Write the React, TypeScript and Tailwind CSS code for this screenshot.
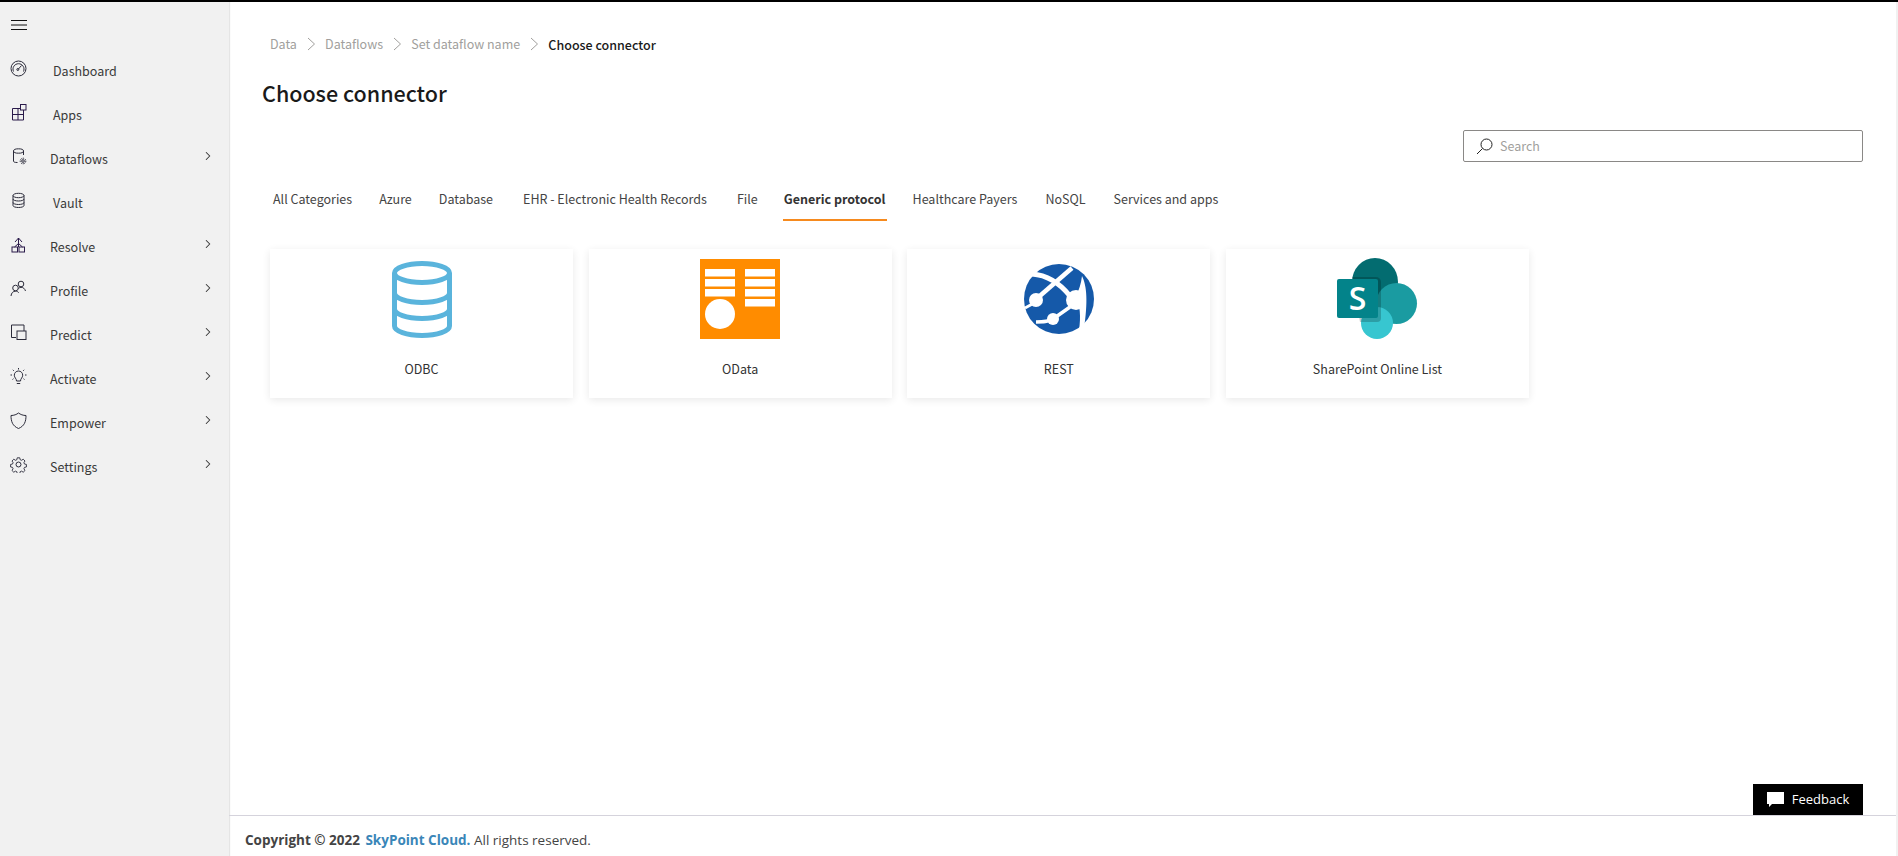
import React from "react";
import {ChevronRight} from "lucide-react";

const IconDashboard = () => (
  <svg width="17" height="17" viewBox="0 0 17 17" fill="none" stroke="#2b2b3a" strokeWidth="1">
    <circle cx="8.5" cy="8.5" r="7.5" />
    <path d="M3.5 11.5a5.5 5.5 0 1 1 10 0" />
    <path d="M8 9.5l3.5-4" />
    <circle cx="7.8" cy="9.5" r="1" />
  </svg>
);

const IconApps = () => (
  <svg width="17" height="17" viewBox="0 0 17 17" fill="none" stroke="#2a1a4a" strokeWidth="1">
    <path d="M2.500 4.500h11v11.500h-11zM2.500 10.500h11M8 4.500v11.500" />
    <rect x="10.500" y="0.500" width="5.500" height="5.500" fill="#f1f1f1" />
  </svg>
);

const IconDataflows = () => (
  <svg width="17" height="17" viewBox="0 0 17 17" fill="none" stroke="#2b2b3a" strokeWidth="1">
    <path d="M3.500 3v10c0 1 1 1.500 4 1.500M13.500 3v4" />
    <ellipse cx="8.500" cy="3" rx="5" ry="2.200" />
    <circle cx="13" cy="13" r="1.300" />
    <circle cx="13" cy="13" r="2.800" strokeDasharray="1.500 1" />
  </svg>
);

const IconVault = () => (
  <svg width="17" height="17" viewBox="0 0 17 17" fill="none" stroke="#2b2b3a" strokeWidth="1">
    <ellipse cx="8.500" cy="3.500" rx="5.500" ry="2.200" />
    <path d="M3 3.500v10c0 1.200 2.500 2 5.500 2s5.500-.8 5.500-2v-10M3 7c0 1.200 2.500 2 5.500 2S14 8.200 14 7M3 10.500c0 1.200 2.500 2 5.500 2s5.500-.8 5.500-2" />
  </svg>
);

const IconResolve = () => (
  <svg width="17" height="17" viewBox="0 0 17 17" fill="none" stroke="#2a1a4a" strokeWidth="1">
    <rect x="2" y="11" width="5.500" height="5" />
    <rect x="9" y="11" width="5.500" height="5" />
    <path d="M8.500 2v9M5 6l3.500-4L12 6M4.500 11l4-3.500 4 3.500" />
  </svg>
);

const IconProfile = () => (
  <svg width="17" height="17" viewBox="0 0 17 17" fill="none" stroke="#2b2b3a" strokeWidth="1">
    <circle cx="5.500" cy="8" r="2.800" />
    <path d="M1 16c.3-3 2-4.800 4.500-4.800 1.500 0 2.500.5 3.200 1.500" />
    <circle cx="11" cy="4" r="2.800" />
    <path d="M8.500 8.500c.8-.8 1.600-1.200 2.500-1.200 2.200 0 3.800 1.400 4.500 3.700" />
  </svg>
);

const IconPredict = () => (
  <svg width="17" height="17" viewBox="0 0 17 17" fill="none" stroke="#2b2b3a" strokeWidth="1">
    <path d="M6 13.500H1.500V1h12.500v6" />
    <rect x="7" y="7" width="9" height="8.500" />
  </svg>
);

const IconActivate = () => (
  <svg width="17" height="17" viewBox="0 0 17 17" fill="none" stroke="#2b2b3a" strokeWidth="1">
    <path d="M6.500 13c0-2.500-2.200-3.200-2.200-5.800a4.200 4.200 0 0 1 8.400 0c0 2.600-2.200 3.300-2.200 5.800zM6.800 15.500h3.400" />
    <path d="M8.500 0v1.500M2.800 1.800l1 1M14.200 1.800l-1 1M.5 7h1.500M15 7h1.500M2.500 11.500l1-.8M14.500 11.500l-1-.8" />
  </svg>
);

const IconEmpower = () => (
  <svg width="17" height="17" viewBox="0 0 17 17" fill="none" stroke="#2b2b3a" strokeWidth="1">
    <path d="M1 3.500C4 3.500 6.500 2.500 8.500 1c2 1.500 4.500 2.500 7.500 2.500 0 6-1.500 10.500-7.500 13C2.500 14 1 9.500 1 3.500z" />
  </svg>
);

const IconSettings = () => (
  <svg width="17" height="17" viewBox="0 0 24 24" fill="none" stroke="#2b2b3a" strokeWidth="1.400">
    <circle cx="12" cy="12" r="3.500" />
    <path d="M10 1.500h4l.6 3 2.200.9 2.600-1.700 2.800 2.800-1.700 2.600.9 2.200 3 .6v4l-3 .6-.9 2.200 1.700 2.600-2.800 2.800-2.600-1.700-2.200.9-.6 3h-4l-.6-3-2.200-.9-2.600 1.700-2.800-2.800 1.700-2.600-.9-2.200-3-.6v-4l3-.6.9-2.200-1.700-2.600 2.800-2.800 2.600 1.700 2.200-.9z" transform="translate(1.200 1.200) scale(.9)" />
  </svg>
);

const navItems = [
  {name: "Dashboard", icon: <IconDashboard />, label: "ml-[26px]", arrow: false},
  {name: "Apps", icon: <IconApps />, label: "ml-[26px]", arrow: false},
  {name: "Dataflows", icon: <IconDataflows />, label: "ml-[23px]", arrow: true},
  {name: "Vault", icon: <IconVault />, label: "ml-[26px]", arrow: false},
  {name: "Resolve", icon: <IconResolve />, label: "ml-[23px]", arrow: true},
  {name: "Profile", icon: <IconProfile />, label: "ml-[23px]", arrow: true},
  {name: "Predict", icon: <IconPredict />, label: "ml-[23px]", arrow: true},
  {name: "Activate", icon: <IconActivate />, label: "ml-[23px]", arrow: true},
  {name: "Empower", icon: <IconEmpower />, label: "ml-[23px]", arrow: true},
  {name: "Settings", icon: <IconSettings />, label: "ml-[23px]", arrow: true},
];

const tabs = [
  {name: "All Categories", cls: "ml-[2px] mr-[25px]"},
  {name: "Azure", cls: "mr-[25px]"},
  {name: "Database", cls: "mr-[28px]"},
  {name: "EHR - Electronic Health Records", cls: "mr-[28px]"},
  {name: "File", cls: "mr-[24px]"},
  {name: "Generic protocol", cls: "mr-[25px]", active: true},
  {name: "Healthcare Payers", cls: "mr-[26px]"},
  {name: "NoSQL", cls: "mr-[26px]"},
  {name: "Services and apps", cls: ""},
];

const OdbcLogo = () => (
  <svg width="60" height="77" viewBox="0 0 60 77" fill="none" stroke="#5ab4dc" strokeWidth="5">
    <ellipse cx="30" cy="12" rx="27.500" ry="9.500" />
    <path d="M2.500 12v53c0 5 12 9.500 27.500 9.500s27.500-4.500 27.500-9.500V12" />
    <path d="M2.500 32c0 5 12 9.500 27.500 9.500s27.500-4.500 27.500-9.500M2.500 48c0 5 12 9.500 27.500 9.500s27.500-4.500 27.500-9.500" />
  </svg>
);

const ODataLogo = () => (
  <svg width="80" height="80" viewBox="0 0 80 80">
    <rect width="80" height="80" fill="#ff8c00" />
    <g fill="#fff">
      <rect x="5" y="10" width="30" height="7.500" />
      <rect x="5" y="20" width="30" height="7.500" />
      <rect x="5" y="30" width="30" height="7.500" />
      <rect x="45" y="10" width="30" height="7.500" />
      <rect x="45" y="20" width="30" height="7.500" />
      <rect x="45" y="30" width="30" height="7.500" />
      <rect x="45" y="40" width="30" height="7.500" />
      <circle cx="20" cy="55" r="15" />
    </g>
  </svg>
);

const RestLogo = () => (
  <svg width="70" height="70" viewBox="0 0 70 70">
    <circle cx="35" cy="35" r="35" fill="#1559a9" />
    <g stroke="#fff" fill="none">
      <path d="M8 10c14 1 26 7 38 22" strokeWidth="5" />
      <path d="M48 4L10 37" strokeWidth="4.500" />
      <path d="M1 44l11-6" strokeWidth="3" />
      <path d="M12 58c7 0 12 0 17-3l17-12" strokeWidth="3.500" />
    </g>
    <g fill="#fff">
      <path d="M58 12C63 22 64 38 60 65L55 66C57 52 56 42 52 32C55 26 57 20 58 12z" />
      <circle cx="12" cy="36" r="7" />
      <circle cx="29" cy="55" r="6" />
      <circle cx="52" cy="36" r="10" />
    </g>
  </svg>
);

const SharePointLogo = () => (
  <svg width="82" height="82" viewBox="0 0 82 82">
    <ellipse cx="39" cy="24" rx="23" ry="24" fill="#036c70" />
    <ellipse cx="60.500" cy="45.500" rx="20.500" ry="20.500" fill="#1a9ba1" />
    <circle cx="41" cy="65" r="16" fill="#37c6d0" />
    <path d="M16 19h24a5 5 0 0 1 5 5v36a4 4 0 0 1-4 4H24z" fill="#000" opacity="0.2" />
    <rect x="1" y="21" width="41" height="39" rx="2" fill="#03838a" />
    <text x="21.500" y="52" textAnchor="middle" fill="#fff" fontSize="32" fontWeight="600" fontFamily="'Open Sans', sans-serif">S</text>
  </svg>
);

const cards = [
  {name: "ODBC", logo: <OdbcLogo />, cls: "pt-[12px]"},
  {name: "OData", logo: <ODataLogo />, cls: "pt-[10px]"},
  {name: "REST", logo: <RestLogo />, cls: "pt-[15px]"},
  {name: "SharePoint Online List", logo: <SharePointLogo />, cls: "pt-[9px]"},
];

const Sep = () => (
  <svg className="mx-[9.600px]" width="9" height="14" viewBox="0 0 9 14" fill="none" stroke="#a19f9d">
    <path d="M1 1l6.500 6L1 13" />
  </svg>
);

export default function App() {
  return (
    <div className="relative flex h-[856px] w-[1898px] flex-col overflow-hidden bg-white font-['Noto_Sans_CJK_SC',sans-serif] text-[12.500px] text-[#333]">
      <div className="h-[2px] shrink-0 bg-black" />
      <div className="flex min-h-0 flex-1">
        <aside className="flex w-[229px] shrink-0 flex-col bg-[#f1f1f1] shadow-[1px_0_1px_rgba(0,0,0,0.1)]">
          <div className="flex h-[47px] shrink-0 items-center pl-[11px] pb-[2px]">
            <svg width="16" height="10" viewBox="0 0 16 10" stroke="#111" strokeWidth="1">
              <path d="M0 .5h16M0 5h16M0 9.500h16" />
            </svg>
          </div>
          {navItems.map((item) => (
            <div key={item.name} className="flex h-[44px] shrink-0 items-center pl-[10px] pr-[14px]">
              <span className="mb-[5px] flex w-[17px] shrink-0">{item.icon}</span>
              <span className={"flex-1 leading-[20px] text-[#3a3a3a] " + item.label}>{item.name}</span>
              {item.arrow && <ChevronRight className="mb-[6px] text-[#333]" size={14} strokeWidth={1.800} />}
            </div>
          ))}
        </aside>
        <div className="flex min-w-0 flex-1 flex-col">
          <main className="relative min-h-0 flex-1">
            <div className="flex items-center pl-[41px] pt-[32px] leading-[18px] text-[#a19f9d]">
              <span>Data</span>
              <Sep />
              <span>Dataflows</span>
              <Sep />
              <span>Set dataflow name</span>
              <Sep />
              <span className="mt-[2px] font-medium text-[#1a1a1a]">Choose connector</span>
            </div>
            <h1 className="mt-[23px] pl-[33px] text-[21.500px] leading-[32px] font-medium text-[#1a1a1a]">Choose connector</h1>
            <div className="mt-[21px] flex justify-end pr-[33px]">
              <div className="flex h-[32px] w-[400px] items-center rounded-[2px] border border-[#8a8886] pl-[12px]">
                <svg width="17" height="17" viewBox="0 0 17 17" fill="none" stroke="#222" strokeWidth="1">
                  <circle cx="10.500" cy="6.500" r="5.500" />
                  <path d="M6.500 10.500L1 16" />
                </svg>
                <span className="ml-[7px] text-[#a19f9d]">Search</span>
              </div>
            </div>
            <div className="mt-[23px] flex pl-[41px]">
              {tabs.map((tab) => (
                <div
                  key={tab.name}
                  className={
                    "h-[36px] px-[1px] leading-[28px] whitespace-nowrap " +
                    tab.cls +
                    (tab.active ? " border-b-2 border-[#f68a1e] font-semibold text-[#333]" : " text-[#444]")
                  }
                >
                  {tab.name}
                </div>
              ))}
            </div>
            <div className="mt-[28px] flex gap-[15.670px] pl-[41px]">
              {cards.map((card) => (
                <div
                  key={card.name}
                  className="flex h-[149px] w-[303px] flex-col items-center bg-white shadow-[0_2px_8px_rgba(0,0,0,0.09)]"
                >
                  <div className={"flex h-[110px] items-start " + card.cls}>{card.logo}</div>
                  <div className="leading-[20px] text-[#333]">{card.name}</div>
                </div>
              ))}
            </div>
          </main>
          <footer className="flex h-[41px] shrink-0 items-center border-t border-[#d5d3dc] pl-[16px] pt-[9px] font-['Open_Sans',sans-serif] text-[13.500px] text-[#444]">
            <b className="font-bold">Copyright © 2022&nbsp;</b>
            <b className="ml-[2px] font-bold text-[#3a86b8]">SkyPoint Cloud.</b>
            <span>&nbsp;All rights reserved.</span>
          </footer>
        </div>
        <div className="w-[2px] shrink-0 bg-[#f1f1f1]" />
      </div>
      <div className="absolute bottom-[41px] right-[35px] flex h-[31px] w-[110px] items-center justify-center bg-black font-['Open_Sans',sans-serif] text-[13px] text-white">
        <svg className="mr-[8px]" width="17" height="15" viewBox="0 0 17 15" fill="#fff">
          <path d="M0 0h17v12H5l-3 3v-3H0z" />
        </svg>
        Feedback
      </div>
    </div>
  );
}
